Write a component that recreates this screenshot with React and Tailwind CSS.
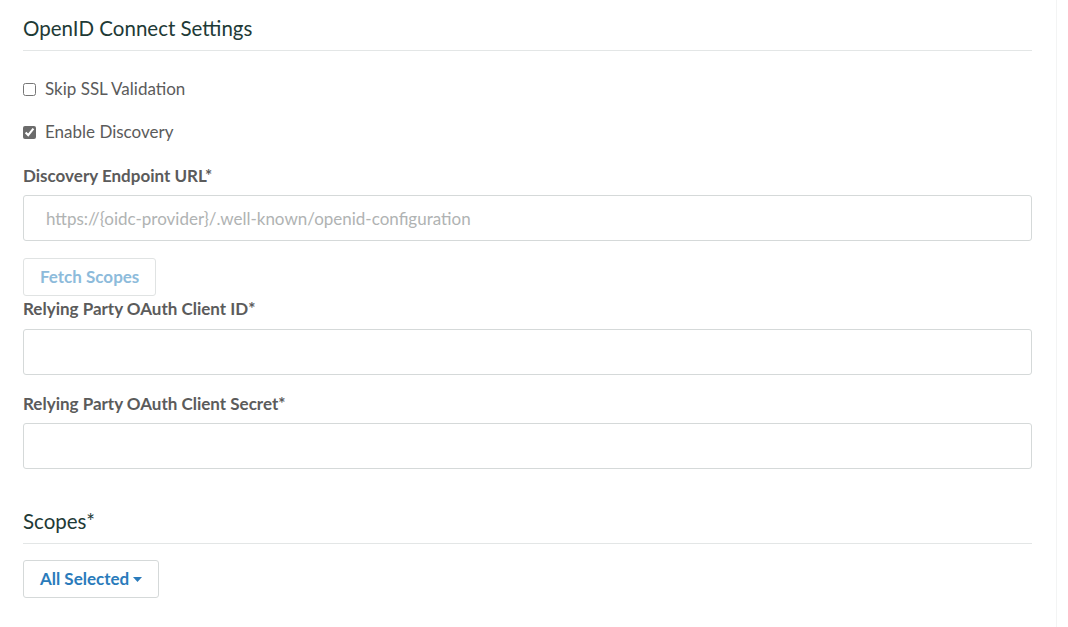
import React, { useState } from 'react';

export default function App() {
  const [skipSsl, setSkipSsl] = useState(false);
  const [discovery, setDiscovery] = useState(true);

  return (
    <div className="min-h-screen bg-white" style={{ fontFamily: 'Lato, "Open Sans", sans-serif' }}>
      <div className="w-[1057px] min-h-[627px] border-r border-[#f3f4f4] pl-[23px] pr-[24px] pt-[14px]">
        {/* OIDC HEADER */}
        <h2 className="text-[20.5px] leading-[28px] text-[#1e3a36] pb-[8px] border-b border-[#e3e6e6]">
          OpenID Connect Settings
        </h2>

        {/* CHECKBOXES */}
        <label className="flex items-center gap-[9px] mt-[27px] text-[17px] leading-[22px] text-[#5b5b5b]">
          <input type="checkbox" checked={skipSsl} onChange={(e) => setSkipSsl(e.target.checked)} className="w-[13px] h-[13px] m-0 accent-[#6b6b6b]" />
          Skip SSL Validation
        </label>
        <label className="flex items-center gap-[9px] mt-[21px] text-[17px] leading-[22px] text-[#5b5b5b]">
          <input type="checkbox" checked={discovery} onChange={(e) => setDiscovery(e.target.checked)} className="w-[13px] h-[13px] m-0 accent-[#6b6b6b]" />
          Enable Discovery
        </label>

        {/* DISCOVERY URL */}
        <div className="mt-[22px] text-[17px] font-bold text-[#5b5b5b] leading-[22px]">Discovery Endpoint URL*</div>
        <input
          type="text"
          placeholder="https://{oidc-provider}/.well-known/openid-configuration"
          className="mt-[8px] w-full h-[46px] border border-[#d5d9d9] rounded-[3px] px-[22px] text-[17px] text-[#333] placeholder:text-[#b0b3b3] outline-none"
        />
        <button disabled className="mt-[17px] h-[38px] px-[16px] border border-[#e0e3e3] rounded-[3px] bg-white text-[17px] font-bold text-[#8dbbdb]">
          Fetch Scopes
        </button>

        {/* CLIENT ID */}
        <div className="mt-[2px] text-[17px] font-bold text-[#5b5b5b] leading-[22px]">Relying Party OAuth Client ID*</div>
        <input type="text" className="mt-[9px] w-full h-[46px] border border-[#d5d9d9] rounded-[3px] px-[22px] text-[17px] outline-none" />

        {/* CLIENT SECRET */}
        <div className="mt-[18px] text-[17px] font-bold text-[#5b5b5b] leading-[22px]">Relying Party OAuth Client Secret*</div>
        <input type="password" className="mt-[8px] w-full h-[46px] border border-[#d5d9d9] rounded-[3px] px-[22px] text-[17px] outline-none" />

        {/* SCOPES */}
        <h2 className="mt-[38px] text-[20.5px] leading-[28px] text-[#1e3a36] pb-[8px] border-b border-[#e3e6e6]">
          Scopes*
        </h2>
        <button className="mt-[16px] h-[38px] px-[16px] border border-[#d5d9d9] rounded-[3px] bg-white text-[17px] font-bold text-[#2a7bbb] flex items-center gap-[4px]">
          All Selected
          <svg width="9" height="5" viewBox="0 0 9 5"><path d="M0 0h9L4.5 5z" fill="#2a7bbb" /></svg>
        </button>
      </div>
    </div>
  );
}
